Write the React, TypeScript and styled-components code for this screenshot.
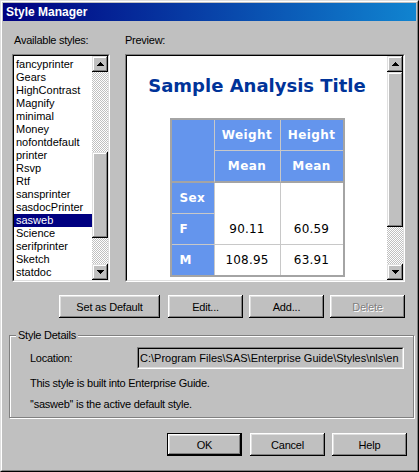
import React from 'react';
import styled, { createGlobalStyle } from 'styled-components';

const GlobalStyle = createGlobalStyle`
  * { box-sizing: border-box; }
  html, body { margin: 0; padding: 0; background: #c0c0c0; }
  body {
    font-family: "Liberation Sans", Arial, sans-serif;
    font-size: 11px;
    color: #000;
  }
`;

const RAISED = 'inset -1px -1px #000, inset 1px 1px #dfdfdf, inset -2px -2px #808080, inset 2px 2px #fff';

const Window = styled.div`
  width: 419px;
  height: 472px;
  background: #c0c0c0;
  border: 1px solid;
  border-color: #dfdfdf #000 #000 #dfdfdf;
  display: flex;
`;

const WindowInner = styled.div`
  flex: 1;
  border: 1px solid;
  border-color: #fff #808080 #808080 #fff;
  padding: 1px;
  display: flex;
  flex-direction: column;
`;

const TitleBar = styled.div`
  height: 18px;
  flex: none;
  padding-left: 3px;
  background: linear-gradient(to right, #000080, #1084d0);
  color: #fff;
  font-weight: bold;
  font-size: 12px;
  line-height: 18px;
  white-space: nowrap;
`;

const Body = styled.div`
  flex: 1;
  display: flex;
  flex-direction: column;
`;

const TopGrid = styled.div`
  margin: 13px 0 0 9px;
  display: grid;
  grid-template-columns: 98px 280px;
  column-gap: 15px;
  row-gap: 7px;
`;

const Label = styled.div<{ $indent?: number }>`
  line-height: 13px;
  padding-left: ${p => p.$indent ?? 0}px;
  white-space: nowrap;
  letter-spacing: -0.25px;
`;

const Sunken = styled.div<{ $w: number; $h: number; $push?: boolean }>`
  width: ${p => p.$w}px;
  height: ${p => p.$h}px;
  flex: none;
  margin-left: ${p => (p.$push ? 'auto' : '0')};
  border: 1px solid;
  border-color: #808080 #fff #fff #808080;
`;

const SunkenInner = styled.div<{ $bg?: string }>`
  height: 100%;
  border: 1px solid;
  border-color: #000 #dfdfdf #dfdfdf #000;
  background: ${p => p.$bg ?? '#fff'};
  display: flex;
  overflow: hidden;
`;

const List = styled.div`
  flex: 1;
  padding-top: 2px;
  overflow: hidden;
`;

const ListItem = styled.div<{ $selected?: boolean }>`
  height: 13px;
  line-height: 13px;
  padding-left: 2px;
  white-space: nowrap;
  background: ${p => (p.$selected ? '#000080' : 'transparent')};
  color: ${p => (p.$selected ? '#fff' : '#000')};
`;

const ScrollBar = styled.div`
  width: 16px;
  flex: none;
  display: flex;
  flex-direction: column;
`;

const ScrollButton = styled.div`
  width: 16px;
  height: 16px;
  flex: none;
  background: #c0c0c0;
  box-shadow: ${RAISED};
  display: flex;
  align-items: center;
  justify-content: center;
`;

const ScrollTrack = styled.div`
  flex: 1;
  display: flex;
  flex-direction: column;
  background-color: #c0c0c0;
  background-image: conic-gradient(#fff 25%, #c0c0c0 0 50%, #fff 0 75%, #c0c0c0 0);
  background-size: 2px 2px;
`;

const ScrollThumb = styled.div<{ $top: number; $h: number }>`
  flex: none;
  margin-top: ${p => p.$top}px;
  height: ${p => p.$h}px;
  background: #c0c0c0;
  box-shadow: ${RAISED};
`;

const Arrow: React.FC<{ down?: boolean }> = ({ down }) => (
  <svg width="7" height="4" viewBox="0 0 7 4" shapeRendering="crispEdges">
    {down ? (
      <g fill="#000">
        <rect x="0" y="0" width="7" height="1" />
        <rect x="1" y="1" width="5" height="1" />
        <rect x="2" y="2" width="3" height="1" />
        <rect x="3" y="3" width="1" height="1" />
      </g>
    ) : (
      <g fill="#000">
        <rect x="3" y="0" width="1" height="1" />
        <rect x="2" y="1" width="3" height="1" />
        <rect x="1" y="2" width="5" height="1" />
        <rect x="0" y="3" width="7" height="1" />
      </g>
    )}
  </svg>
);

const VScroll: React.FC<{ top: number; h: number }> = ({ top, h }) => (
  <ScrollBar>
    <ScrollButton><Arrow /></ScrollButton>
    <ScrollTrack>
      <ScrollThumb $top={top} $h={h} />
    </ScrollTrack>
    <ScrollButton><Arrow down /></ScrollButton>
  </ScrollBar>
);

const PreviewArea = styled.div`
  flex: 1;
  background: #fff;
  display: flex;
  flex-direction: column;
  align-items: center;
  padding-top: 19px;
  overflow: hidden;
`;

const ReportTitle = styled.div`
  font-family: "DejaVu Sans", Verdana, sans-serif;
  font-weight: bold;
  font-size: 18px;
  line-height: 22px;
  color: #003399;
  white-space: nowrap;
`;

const Report = styled.table`
  margin-top: 21px;
  border: 2px solid #a4a4a4;
  border-spacing: 0;
  font-family: "DejaVu Sans", Verdana, sans-serif;
  font-size: 12px;
  flex: none;
`;

type CellProps = {
  $w?: number;
  $h?: number;
  $r?: boolean;
  $b?: 'thin' | 'thick';
};

const cellBorders = (p: CellProps) => `
  border-right: ${p.$r ? '1px solid #c8c8c8' : 'none'};
  border-bottom: ${p.$b === 'thick' ? '2px solid #a4a4a4' : p.$b === 'thin' ? '1px solid #c8c8c8' : 'none'};
  ${p.$w ? `width: ${p.$w}px;` : ''}
  ${p.$h ? `height: ${p.$h}px;` : ''}
`;

const HeadCell = styled.th<CellProps>`
  background: #6495ed;
  color: #fff;
  font-weight: bold;
  letter-spacing: 0.4px;
  text-align: center;
  padding: 0;
  line-height: 14px;
  ${p => cellBorders(p)}
`;

const StubCell = styled.th<CellProps>`
  background: #6495ed;
  color: #fff;
  font-weight: bold;
  letter-spacing: 0.4px;
  text-align: left;
  padding: 0 0 0 8px;
  line-height: 14px;
  ${p => cellBorders(p)}
`;

const DataCell = styled.td<CellProps & { $bottom?: boolean }>`
  background: #fff;
  color: #000;
  text-align: center;
  letter-spacing: 0.2px;
  line-height: 14px;
  padding: 0 0 ${p => (p.$bottom ? 8 : 0)}px 0;
  vertical-align: ${p => (p.$bottom ? 'bottom' : 'middle')};
  ${p => cellBorders(p)}
`;

const ButtonRow = styled.div<{ $mt: number; $mr: number; $gap: number }>`
  display: flex;
  justify-content: flex-end;
  gap: ${p => p.$gap}px;
  margin-top: ${p => p.$mt}px;
  margin-right: ${p => p.$mr}px;
`;

const Button = styled.button<{ $w?: number; $default?: boolean; $after?: number }>`
  width: ${p => p.$w ?? 75}px;
  height: 23px;
  margin: 0 ${p => p.$after ?? 0}px 0 0;
  padding: 0;
  background: #c0c0c0;
  font-family: "Liberation Sans", Arial, sans-serif;
  font-size: 11px;
  letter-spacing: -0.2px;
  color: #000;
  border: ${p => (p.$default ? '1px solid #000' : 'none')};
  box-shadow: inset -1px -1px #000, inset 1px 1px #fff, inset -2px -2px #808080, inset 2px 2px #dfdfdf;
  &:disabled {
    color: #808080;
    text-shadow: 1px 1px 0 #fff;
  }
`;

const Group = styled.fieldset`
  margin: 11px 2px 0 6px;
  padding: 0;
  min-width: 0;
  border: 1px solid #808080;
  box-shadow: inset 1px 1px 0 #fff, 1px 1px 0 #fff;
`;

const Legend = styled.legend`
  margin-left: 6px;
  padding: 0 2px;
  line-height: 13px;
  letter-spacing: -0.25px;
  background: #c0c0c0;
`;

const GroupBody = styled.div`
  padding: 5px 9px 6px 20px;
  display: flex;
  flex-direction: column;
  gap: 8px;
`;

const FieldRow = styled.div`
  display: flex;
  align-items: center;
  height: 22px;
`;

const FieldText = styled.div`
  flex: 1;
  padding-left: 1px;
  line-height: 18px;
  white-space: nowrap;
  overflow: hidden;
`;

const InfoLine = styled.div`
  line-height: 13px;
  white-space: nowrap;
  letter-spacing: -0.25px;
`;

const styles = [
  'fancyprinter', 'Gears', 'HighContrast', 'Magnify', 'minimal', 'Money',
  'nofontdefault', 'printer', 'Rsvp', 'Rtf', 'sansprinter', 'sasdocPrinter',
  'sasweb', 'Science', 'serifprinter', 'Sketch', 'statdoc', 'Statistical',
];

export default function App() {
  return (
    <>
      <GlobalStyle />
      <Window>
        <WindowInner>
          <TitleBar>Style Manager</TitleBar>
          <Body>
            <TopGrid>
              <Label $indent={2}>Available styles:</Label>
              <Label>Preview:</Label>
              <Sunken $w={98} $h={228}>
                <SunkenInner>
                  <List>
                    {styles.map(s => (
                      <ListItem key={s} $selected={s === 'sasweb'}>{s}</ListItem>
                    ))}
                  </List>
                  <VScroll top={80} h={86} />
                </SunkenInner>
              </Sunken>
              <Sunken $w={280} $h={228}>
                <SunkenInner>
                  <PreviewArea>
                    <ReportTitle>Sample Analysis Title</ReportTitle>
                    <Report>
                      <tbody>
                        <tr>
                          <HeadCell rowSpan={2} $w={43} $r $b="thick" />
                          <HeadCell $w={66} $h={31} $r $b="thin">Weight</HeadCell>
                          <HeadCell $w={62} $h={31} $b="thin">Height</HeadCell>
                        </tr>
                        <tr>
                          <HeadCell $h={32} $r $b="thick">Mean</HeadCell>
                          <HeadCell $h={32} $b="thick">Mean</HeadCell>
                        </tr>
                        <tr>
                          <StubCell $h={31} $r $b="thin">Sex</StubCell>
                          <DataCell rowSpan={2} $r $b="thin" $bottom>90.11</DataCell>
                          <DataCell rowSpan={2} $b="thin" $bottom>60.59</DataCell>
                        </tr>
                        <tr>
                          <StubCell $h={31} $r $b="thin">F</StubCell>
                        </tr>
                        <tr>
                          <StubCell $h={30} $r>M</StubCell>
                          <DataCell $r>108.95</DataCell>
                          <DataCell>63.91</DataCell>
                        </tr>
                      </tbody>
                    </Report>
                  </PreviewArea>
                  <VScroll top={0} h={155} />
                </SunkenInner>
              </Sunken>
            </TopGrid>

            <ButtonRow $mt={13} $mr={11} $gap={6}>
              <Button $w={101} $after={2}>Set as Default</Button>
              <Button>Edit...</Button>
              <Button>Add...</Button>
              <Button disabled>Delete</Button>
            </ButtonRow>

            <Group>
              <Legend>Style Details</Legend>
              <GroupBody>
                <FieldRow>
                  <Label>Location:</Label>
                  <Sunken $w={267} $h={22} $push>
                    <SunkenInner $bg="#c0c0c0">
                      <FieldText>C:\Program Files\SAS\Enterprise Guide\Styles\nls\en</FieldText>
                    </SunkenInner>
                  </Sunken>
                </FieldRow>
                <InfoLine>This style is built into Enterprise Guide.</InfoLine>
                <InfoLine>''sasweb'' is the active default style.</InfoLine>
              </GroupBody>
            </Group>

            <ButtonRow $mt={15} $mr={9} $gap={7}>
              <Button $default $after={1}>OK</Button>
              <Button>Cancel</Button>
              <Button>Help</Button>
            </ButtonRow>
          </Body>
        </WindowInner>
      </Window>
    </>
  );
}
